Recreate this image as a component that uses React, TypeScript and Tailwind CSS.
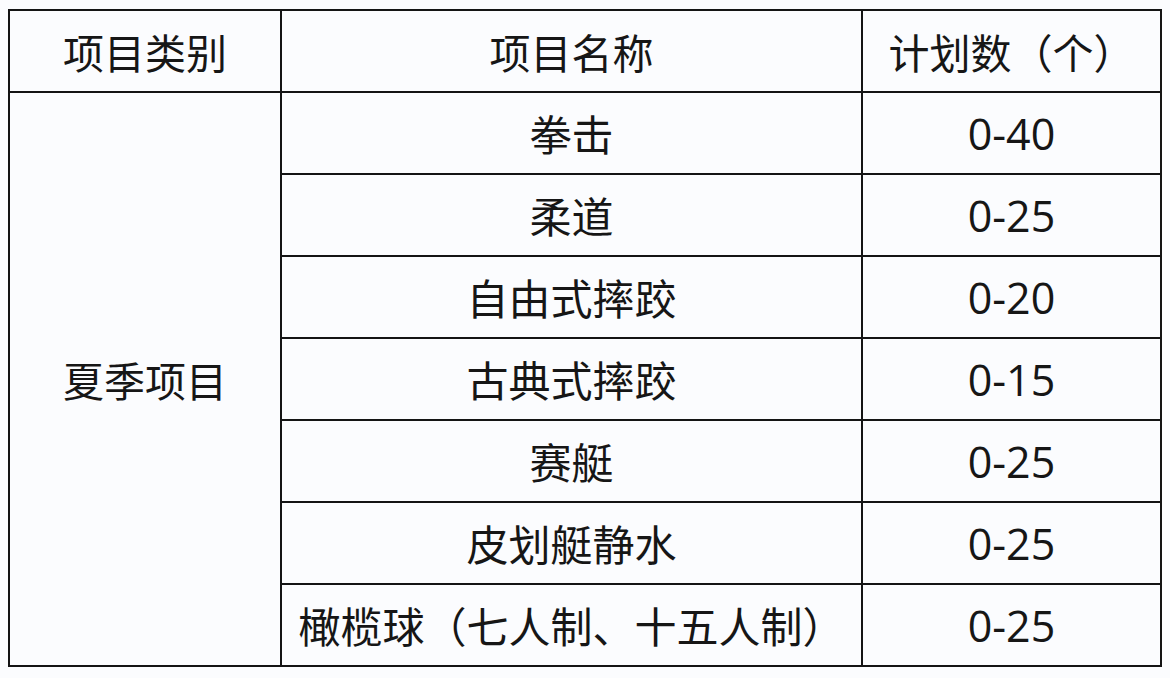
import React from "react";

const rows = [
  { name: "拳击", count: "0-40" },
  { name: "柔道", count: "0-25" },
  { name: "自由式摔跤", count: "0-20" },
  { name: "古典式摔跤", count: "0-15" },
  { name: "赛艇", count: "0-25" },
  { name: "皮划艇静水", count: "0-25" },
  { name: "橄榄球（七人制、十五人制）", count: "0-25" },
];

const cell = "border-2 border-[#141414] text-center align-middle p-0";

export default function App() {
  return (
    <div
      className="w-[1170px] h-[678px] bg-[#fbfcfe] pt-[9px] pl-[8px] text-[#161616] text-[41px] leading-none"
      style={{ fontFamily: '"Noto Sans CJK SC", "Noto Sans", sans-serif' }}
    >
      <table className="border-collapse table-fixed w-[1152px]">
        <colgroup>
          <col className="w-[272px]" />
          <col className="w-[581px]" />
          <col className="w-[299px]" />
        </colgroup>
        <thead>
          <tr className="h-[82px]">
            <th className={`${cell} font-normal`}>项目类别</th>
            <th className={`${cell} font-normal`}>项目名称</th>
            <th className={`${cell} font-normal`}>计划数（个）</th>
          </tr>
        </thead>
        <tbody>
          {rows.map((r, i) => (
            <tr key={r.name} className="h-[82px]">
              {i === 0 && (
                <td rowSpan={rows.length} className={cell}>
                  夏季项目
                </td>
              )}
              <td className={`${cell} whitespace-nowrap text-[42px]`}>{r.name}</td>
              <td className={`${cell} text-[43px] font-['Open_Sans',sans-serif]`}>{r.count}</td>
            </tr>
          ))}
        </tbody>
      </table>
    </div>
  );
}
